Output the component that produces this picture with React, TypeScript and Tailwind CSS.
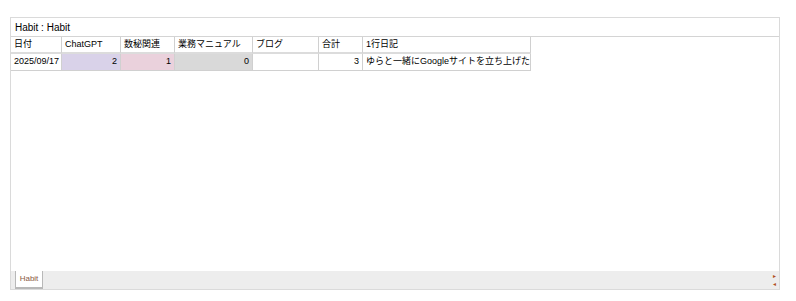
export default function App() {
  const cols = [
    { h: "日付", w: 51 },
    { h: "ChatGPT", w: 59 },
    { h: "数秘関連", w: 54 },
    { h: "業務マニュアル", w: 78 },
    { h: "ブログ", w: 66 },
    { h: "合計", w: 44 },
    { h: "1行日記", w: 168 },
  ];
  const data = [
    { v: "2025/09/17", bg: "bg-white", right: false },
    { v: "2", bg: "bg-[#d9d2e9]", right: true },
    { v: "1", bg: "bg-[#ead1dc]", right: true },
    { v: "0", bg: "bg-[#d9d9d9]", right: true },
    { v: "", bg: "bg-white", right: true },
    { v: "3", bg: "bg-white", right: true },
    { v: "ゆらと一緒にGoogleサイトを立ち上げた", bg: "bg-white", right: false },
  ];
  return (
    <div className="w-[796px] h-[301px] bg-white pt-[17px] pl-[10px] font-['Liberation_Sans','Noto_Sans_CJK_JP',sans-serif] text-black">
      <div className="w-[770px] h-[273px] border border-[#dadada] flex flex-col">
        <div className="h-[19px] flex items-center pl-[4px] text-[10px] border-b border-[#d4d4d4]">Habit : Habit</div>
        <div className="flex-1 flex flex-col">
          <div className="flex">
            {cols.map((c, i) => (
              <div
                key={i}
                style={{ width: c.w }}
                className="h-[17px] flex items-center pl-[3px] text-[9px] border-r border-[#d0d0d0] border-b-2 border-b-[#dcdcdc]"
              >
                {c.h}
              </div>
            ))}
          </div>
          <div className="flex">
            {data.map((d, i) => (
              <div
                key={i}
                style={{ width: cols[i].w }}
                className={`h-[17px] flex items-center px-[3px] text-[9px] whitespace-nowrap border-r border-b border-[#d0d0d0] ${d.bg} ${d.right ? "justify-end" : ""}`}
              >
                {d.v}
              </div>
            ))}
          </div>
        </div>
        <div className="h-[18px] bg-[#ededed] flex items-stretch pl-[4px] relative">
          <div className="w-[28px] bg-white border-l border-r border-b-2 border-[#b8b8b8] flex items-center justify-center text-[8px] text-[#8a5a45]">
            Habit
          </div>
          <div className="absolute right-[3px] top-[2px] flex flex-col gap-[2px] text-[6px] leading-[6px] text-[#b05020]">
            <span>▸</span>
            <span>◂</span>
          </div>
        </div>
      </div>
    </div>
  );
}
